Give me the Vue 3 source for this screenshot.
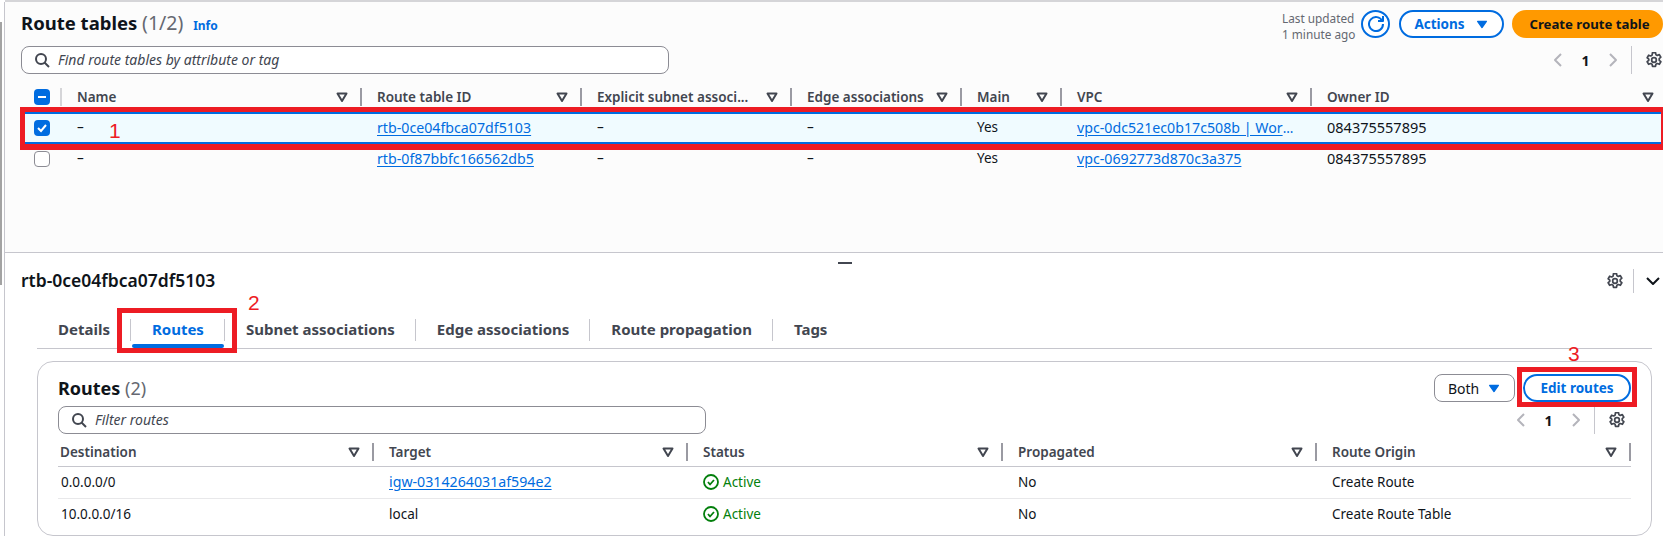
<template>
  <div class="page">
    <div class="gutter"><div class="gutter-thumb"></div></div>

    <div class="main">
      <section class="top-panel">
        <header class="top-head">
          <h1 class="title">Route tables <span class="count">(1/2)</span> <a class="info">Info</a></h1>
          <div class="top-actions">
            <div class="updated">Last updated<br />1 minute ago</div>
            <button class="refresh">
              <svg viewBox="0 0 16 16" width="16" height="16" class="ico">
                <path d="M10 5h5V0" />
                <path d="M15 8a7 7 0 1 1-.7-3" />
              </svg>
            </button>
            <button class="btn actions">
              Actions
              <svg viewBox="0 0 16 16" width="14" height="14" class="caret"><path d="m8 12 5-7H3z" /></svg>
            </button>
            <button class="btn primary">Create route table</button>
          </div>
        </header>

        <div class="toolbar">
          <div class="search">
            <svg viewBox="0 0 16 16" width="16" height="16" class="ico">
              <circle cx="7" cy="7" r="5" />
              <path d="m15 15-4.5-4.5" />
            </svg>
            <span>Find route tables by attribute or tag</span>
          </div>
          <div class="pager">
            <svg viewBox="0 0 16 16" width="16" height="16" class="ico pager-off"><path d="m11 2-6 6 6 6" /></svg>
            <span class="pager-num">1</span>
            <svg viewBox="0 0 16 16" width="16" height="16" class="ico pager-off"><path d="m5 2 6 6-6 6" /></svg>
            <span class="pager-sep"></span>
            <svg viewBox="0.5 0.5 15 15" width="16" height="16" class="ico gear">
              <path :d="gearPath" />
              <circle cx="8" cy="8" r="2.2" />
            </svg>
          </div>
        </div>

        <div class="rt-table">
          <div class="rt-grid rt-head">
            <div class="th check-th">
              <span class="check on">
                <svg viewBox="0 0 16 16" width="16" height="16"><path d="M4 8h8" /></svg>
              </span>
            </div>
            <div v-for="col in tableColumns" :key="col" class="th">
              <span>{{ col }}</span>
              <svg viewBox="0 0 12 12" width="12" height="12" class="sort"><path d="M1.500 2.500h9L6 10z" /></svg>
            </div>
          </div>
          <div
            v-for="row in routeTables"
            :key="row.id"
            class="rt-grid rt-row"
            :class="{ selected: row.selected }"
          >
            <div class="td check-td">
              <span class="check" :class="{ on: row.selected }">
                <svg v-if="row.selected" viewBox="0 0 16 16" width="16" height="16"><path d="m4 8 3 3 5-6" /></svg>
              </span>
            </div>
            <div class="td">–</div>
            <div class="td"><a class="link">{{ row.id }}</a></div>
            <div class="td">–</div>
            <div class="td">–</div>
            <div class="td">Yes</div>
            <div class="td"><a class="link">{{ row.vpc }}</a><span class="more">{{ row.more }}</span></div>
            <div class="td owner">084375557895</div>
          </div>
        </div>
      </section>

      <section class="bottom-panel">
        <div class="handle"></div>
        <div class="detail-head">
          <h2 class="detail-title">rtb-0ce04fbca07df5103</h2>
          <div class="detail-tools">
            <svg viewBox="0.5 0.5 15 15" width="16" height="16" class="ico gear">
              <path :d="gearPath" />
              <circle cx="8" cy="8" r="2.2" />
            </svg>
            <span class="detail-sep"></span>
            <svg viewBox="0 0 16 16" width="16" height="16" class="ico"><path d="m2 5 6 6 6-6" /></svg>
          </div>
        </div>

        <nav class="tabs">
          <a v-for="tab in tabs" :key="tab" class="tab" :class="{ active: tab === 'Routes' }">{{ tab }}</a>
        </nav>

        <div class="card">
          <div class="card-head">
            <h3 class="card-title">Routes <span class="count">(2)</span></h3>
            <div class="card-actions">
              <div class="select">
                Both
                <svg viewBox="0 0 16 16" width="14" height="14" class="caret"><path d="m8 12 5-7H3z" /></svg>
              </div>
              <button class="btn edit">Edit routes</button>
            </div>
          </div>

          <div class="toolbar card-toolbar">
            <div class="search">
              <svg viewBox="0 0 16 16" width="16" height="16" class="ico">
                <circle cx="7" cy="7" r="5" />
                <path d="m15 15-4.5-4.5" />
              </svg>
              <span>Filter routes</span>
            </div>
            <div class="pager">
              <svg viewBox="0 0 16 16" width="16" height="16" class="ico pager-off"><path d="m11 2-6 6 6 6" /></svg>
              <span class="pager-num">1</span>
              <svg viewBox="0 0 16 16" width="16" height="16" class="ico pager-off"><path d="m5 2 6 6-6 6" /></svg>
              <span class="pager-sep"></span>
              <svg viewBox="0.5 0.5 15 15" width="16" height="16" class="ico gear">
                <path :d="gearPath" />
                <circle cx="8" cy="8" r="2.2" />
              </svg>
            </div>
          </div>

          <div class="routes">
            <div class="routes-grid routes-head">
              <div v-for="col in routeColumns" :key="col" class="th">
                <span>{{ col }}</span>
                <svg viewBox="0 0 12 12" width="12" height="12" class="sort"><path d="M1.500 2.500h9L6 10z" /></svg>
              </div>
            </div>
            <div v-for="route in routes" :key="route.dest" class="routes-grid routes-row">
              <div class="td">{{ route.dest }}</div>
              <div class="td">
                <a v-if="route.linked" class="link">{{ route.target }}</a>
                <template v-else>{{ route.target }}</template>
              </div>
              <div class="td status">
                <svg viewBox="0 0 16 16" width="16" height="16" class="ico ok">
                  <circle cx="8" cy="8" r="7" />
                  <path d="m5 8 2 2.5L11 6" />
                </svg>
                Active
              </div>
              <div class="td">No</div>
              <div class="td">{{ route.origin }}</div>
            </div>
          </div>
        </div>
      </section>
    </div>

    <!-- red annotations painted over the screenshot -->
    <div class="mark mark-row"></div>
    <div class="mark mark-tab"></div>
    <div class="mark mark-edit"></div>
    <span class="mark-num num-1">1</span>
    <span class="mark-num num-2">2</span>
    <span class="mark-num num-3">3</span>
  </div>
</template>

<script setup>
const gearPath =
  'M6.6 1h2.8l.4 2 1.3.7 1.9-.7 1.4 2.4-1.5 1.3v1.6l1.5 1.3-1.4 2.4-1.9-.7-1.3.7-.4 2H6.6l-.4-2-1.3-.7-1.9.7-1.4-2.4 1.5-1.3V7.2L1.600 5.900l1.400-2.400 1.900.7 1.300-.7z'

const tableColumns = [
  'Name',
  'Route table ID',
  'Explicit subnet associ...',
  'Edge associations',
  'Main',
  'VPC',
  'Owner ID'
]

const routeTables = [
  { id: 'rtb-0ce04fbca07df5103', vpc: 'vpc-0dc521ec0b17c508b | Wor', more: '...', selected: true },
  { id: 'rtb-0f87bbfc166562db5', vpc: 'vpc-0692773d870c3a375', more: '', selected: false }
]

const tabs = ['Details', 'Routes', 'Subnet associations', 'Edge associations', 'Route propagation', 'Tags']

const routeColumns = ['Destination', 'Target', 'Status', 'Propagated', 'Route Origin']

const routes = [
  { dest: '0.0.0.0/0', target: 'igw-0314264031af594e2', linked: true, origin: 'Create Route' },
  { dest: '10.0.0.0/16', target: 'local', linked: false, origin: 'Create Route Table' }
]
</script>

<style>
html,
body {
  margin: 0;
  background: #fff;
}
</style>

<style scoped>
.page {
  position: relative;
  display: flex;
  width: 1663px;
  height: 536px;
  overflow: hidden;
  background: #fff;
  color: #0f141a;
  font-family: "Noto Sans", "Open Sans", sans-serif;
  font-size: 14px;
}

.gutter {
  width: 4px;
  border-right: 1px solid #c6c6cd;
  margin-top: 2px;
  flex: none;
}

.gutter-thumb {
  width: 2px;
  height: 263px;
  margin-top: 20px;
  background: #a3a3a3;
}

.main {
  flex: 1;
  min-width: 0;
  display: flex;
  flex-direction: column;
}

.top-panel {
  height: 250px;
  padding-left: 16px;
  border-top: 2px solid #d5d5d8;
  border-bottom: 1px solid #c6c6cd;
  background: #fcfcfc;
  flex: none;
}

.top-head {
  display: flex;
  justify-content: space-between;
  align-items: center;
  height: 28px;
  padding-top: 8px;
}

.title {
  margin: 0;
  padding-bottom: 3px;
  font-size: 18.500px;
  font-weight: 700;
}

.title .count {
  font-size: 19.500px;
}

.count {
  font-weight: 400;
  color: #656871;
}

.info {
  margin-left: 5px;
  font-size: 12px;
  color: #006ce0;
}

.top-actions {
  display: flex;
  align-items: center;
}

.updated {
  width: 79px;
  padding-top: 4px;
  font-size: 11.800px;
  line-height: 16px;
  color: #656871;
}

.refresh {
  display: flex;
  align-items: center;
  justify-content: center;
  width: 29px;
  height: 28px;
  padding: 0;
  border: 2px solid #006ce0;
  border-radius: 50%;
  background: #fff;
  color: #006ce0;
  margin-right: 9px;
}

.ico {
  fill: none;
  stroke: currentColor;
  stroke-width: 2;
  stroke-linejoin: round;
  flex: none;
}

.btn {
  height: 28px;
  padding: 0;
  border: 2px solid #006ce0;
  border-radius: 20px;
  background: #fff;
  color: #006ce0;
  font: inherit;
  font-weight: 700;
  font-size: 13.500px;
  display: flex;
  align-items: center;
  justify-content: center;
}

.actions {
  width: 105px;
  gap: 10px;
  margin-right: 8px;
}

.primary {
  width: 151px;
  padding-left: 4px;
  border-color: #ff9900;
  background: #ff9900;
  color: #0f141a;
  font-size: 13.200px;
}

.caret {
  fill: #006ce0;
  stroke: #006ce0;
  stroke-width: 1.500;
  stroke-linejoin: round;
  flex: none;
}

.toolbar {
  display: flex;
  justify-content: space-between;
  align-items: center;
  margin-top: 8px;
  height: 28px;
  padding-right: 1px;
}

.search {
  display: flex;
  align-items: center;
  gap: 8px;
  width: 648px;
  height: 28px;
  padding-left: 12px;
  box-sizing: border-box;
  border: 1px solid #8c8c94;
  border-radius: 8px;
  background: #fff;
  color: #424650;
  font-style: italic;
  font-size: 14px;
}

.search span {
  padding-bottom: 2px;
}

.pager {
  display: flex;
  align-items: center;
  color: #424650;
}

.pager-off {
  color: #b4b4bb;
}

.pager-num {
  width: 39px;
  text-align: center;
  font-weight: 700;
  color: #0f141a;
}

.pager-sep {
  width: 1px;
  height: 28px;
  margin: 0 14px 0 10px;
  background: #c6c6cd;
}

.gear {
  color: #424650;
  stroke-width: 1.600;
}

.rt-table {
  margin-top: 14px;
  margin-left: 4px;
}

.rt-grid {
  display: grid;
  grid-template-columns: 37px 300px 220px 210px 170px 100px 250px 1fr;
}

.rt-head {
  height: 18px;
  margin-bottom: 6px;
}

.th {
  display: flex;
  justify-content: space-between;
  align-items: center;
  padding: 0 12px 0 15px;
  border-right: 2px solid #9a9aa2;
  color: #424650;
  font-weight: 600;
  font-size: 13.500px;
  white-space: nowrap;
}

.check-th {
  padding: 0 0 0 9px;
  border-right-color: #d5d5d8;
}

.rt-head .th:last-child {
  border-right: 0;
  padding-right: 9px;
}

.sort {
  fill: none;
  stroke: #424650;
  stroke-width: 2;
  stroke-linejoin: round;
  flex: none;
}

.rt-row {
  height: 30px;
  align-items: center;
}

.rt-row.selected {
  height: 32px;
  box-sizing: border-box;
  border-top: 2px solid #006ce0;
  border-bottom: 2px solid #006ce0;
  background: #f0fbff;
}

.td {
  padding-left: 15px;
  padding-bottom: 2px;
  white-space: nowrap;
  font-size: 13.500px;
}

.owner {
  font-size: 14.500px;
}

.check-td {
  padding-left: 9px;
  padding-bottom: 0;
  display: flex;
}

.check {
  display: block;
  width: 16px;
  height: 16px;
  box-sizing: border-box;
  border: 1px solid #8c8c94;
  border-radius: 4px;
  background: #fff;
}

.check.on {
  border: 0;
  background: #006ce0;
}

.check svg {
  display: block;
  fill: none;
  stroke: #fff;
  stroke-width: 2;
}

.link {
  color: #006ce0;
  font-size: 14.200px;
  text-decoration: underline;
  text-underline-offset: 2px;
}

.more {
  color: #006ce0;
}

.bottom-panel {
  position: relative;
  flex: 1;
  min-height: 0;
}

.handle {
  position: absolute;
  left: 833px;
  top: 9px;
  width: 14px;
  height: 2px;
  background: #424650;
}

.detail-head {
  display: flex;
  justify-content: space-between;
  align-items: center;
  height: 24px;
  margin-top: 16px;
  padding: 0 2px 0 16px;
}

.detail-title {
  margin: 0;
  padding-bottom: 3px;
  font-size: 17.500px;
  font-weight: 600;
}

.detail-tools {
  display: flex;
  align-items: center;
}

.detail-sep {
  width: 1px;
  height: 24px;
  margin: 0 11px 0 10px;
  background: #c6c6cd;
}

.tabs {
  display: flex;
  height: 32px;
  margin: 23px 11px 0 32px;
  border-bottom: 1px solid #c6c6cd;
}

.tab {
  position: relative;
  display: flex;
  align-items: center;
  height: 20px;
  padding: 0 20px 2px 21px;
  margin-top: 3px;
  border-right: 1px solid #c6c6cd;
  color: #424650;
  font-weight: 700;
  font-size: 15px;
  box-sizing: content-box;
}

.tab:last-child {
  border-right: 0;
}

.tab.active {
  color: #006ce0;
}

.tab.active::after {
  content: "";
  position: absolute;
  left: 1px;
  right: 0;
  top: 25px;
  height: 4px;
  border-radius: 2px;
  background: #006ce0;
}

.card {
  height: 175px;
  margin: 12px 11px 0 32px;
  padding: 12px 20px 0;
  box-sizing: border-box;
  border: 1px solid #c6c6cd;
  border-radius: 16px;
  background: #fff;
}

.card-head {
  display: flex;
  justify-content: space-between;
  align-items: center;
  height: 28px;
}

.card-title {
  margin: 0;
  font-size: 18px;
  font-weight: 700;
}

.card-actions {
  display: flex;
  gap: 8px;
}

.select {
  display: flex;
  align-items: center;
  justify-content: space-between;
  width: 81px;
  height: 28px;
  padding: 0 13px 0 13px;
  box-sizing: border-box;
  border: 1px solid #8c8c94;
  border-radius: 8px;
}

.edit {
  width: 108px;
}

.card-toolbar {
  margin-top: 4px;
  padding-right: 6px;
}

.routes {
  margin-top: 9px;
}

.routes-grid {
  display: grid;
  grid-template-columns: 316px 314px 315px 314px 314px;
}

.routes-head {
  height: 18px;
  padding-bottom: 5px;
  border-bottom: 1px solid #c6c6cd;
}

.routes-head .th:first-child {
  padding-left: 2px;
}

.routes-row {
  height: 31px;
  align-items: center;
  border-bottom: 1px solid #e8e8ea;
}

.routes-row:last-child {
  border-bottom: 0;
}

.routes-row .td:first-child {
  padding-left: 3px;
}

.status {
  display: flex;
  align-items: center;
  gap: 4px;
  color: #037f0c;
}

.ok {
  stroke-width: 1.800;
}

.mark {
  position: absolute;
  box-sizing: border-box;
  border: 5px solid #ed1c24;
}

.mark-row {
  left: 20px;
  top: 107px;
  width: 1646px;
  height: 43px;
  border-bottom-width: 6px;
}

.mark-tab {
  left: 117px;
  top: 308px;
  width: 120px;
  height: 45px;
}

.mark-edit {
  left: 1517px;
  top: 367px;
  width: 120px;
  height: 40px;
}

.mark-num {
  position: absolute;
  color: #ed1c24;
  font-family: "Liberation Sans", sans-serif;
  font-size: 21px;
  line-height: 20px;
}

.num-1 {
  left: 109px;
  top: 121px;
}

.num-2 {
  left: 248px;
  top: 293px;
}

.num-3 {
  left: 1568px;
  top: 344px;
}
</style>
